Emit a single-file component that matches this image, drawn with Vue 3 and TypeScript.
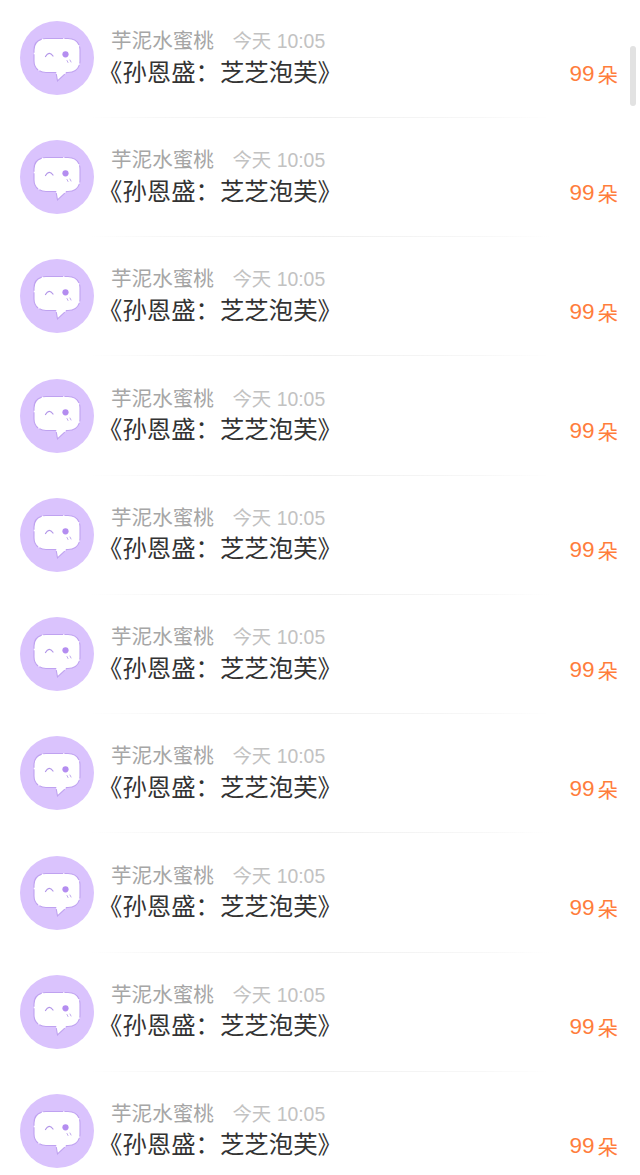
<script setup lang="ts">
interface Gift {
  id: number
  name: string
  time: string
  title: string
  count: number
}

const gifts: Gift[] = Array.from({ length: 10 }, (_, i) => ({
  id: i,
  name: '芋泥水蜜桃',
  time: '今天 10:05',
  title: '《孙恩盛：芝芝泡芙》',
  count: 99,
}))
</script>

<template>
  <div class="page">
    <div v-for="g in gifts" :key="g.id" class="row">
      <div class="main">
        <svg class="avatar" viewBox="0 0 74 74">
          <circle cx="37" cy="37" r="37" fill="#dac3fd" />
          <path
            d="M26 17.500 H48 C55 17.500 60 22 60 29 V40 C60 47 55 51.500 48 51.500 H46.500 L37.500 60 L36 51.500 H26 C19 51.500 14 47 14 40 V29 C14 22 19 17.500 26 17.500 Z"
            fill="#fff"
            stroke="#bfa2f0"
            stroke-width="1.1"
            stroke-dasharray="17 1.5"
          />
          <path d="M25.500 35.500 Q29 29.500 33 35" fill="none" stroke="#b295e8" stroke-width="1.2" stroke-linecap="round" />
          <circle cx="45.500" cy="33.300" r="3.100" fill="#b48df0" />
          <path d="M47 39.500 l1 2 M50 39 l1 2" stroke="#b9a0ea" stroke-width="0.9" stroke-linecap="round" />
        </svg>
        <div class="info">
          <div class="meta">
            <span class="name">{{ g.name }}</span>
            <span class="time">{{ g.time }}</span>
          </div>
          <div class="title">{{ g.title }}</div>
        </div>
        <div class="count">
          <span class="num">{{ g.count }}</span>
          <span class="unit">朵</span>
        </div>
      </div>
      <div class="divider"></div>
    </div>
    <div class="scrollbar"></div>
  </div>
</template>

<style>
html,
body {
  background: #fff;
  overflow: hidden;
}
</style>

<style scoped>
.page {
  position: relative;
  width: 640px;
  height: 1175px;
  overflow: hidden;
  background: #fff;
  font-family: "Liberation Sans", "Noto Sans CJK SC", sans-serif;
}

.row {
  height: 119.22px;
  padding-top: 21px;
  box-sizing: border-box;
}

.main {
  display: flex;
  height: 96px;
  padding: 0 22px 0 20px;
  box-sizing: border-box;
}

.avatar {
  width: 74px;
  height: 74px;
  flex-shrink: 0;
}

.info {
  flex: 1;
  margin-left: 4px;
  min-width: 0;
}

.meta {
  display: flex;
  align-items: center;
  gap: 18.5px;
  height: 24px;
  margin-top: 8px;
  padding-left: 13px;
}

.name {
  font-size: 20.6px;
  color: #a6a6a6;
  line-height: 24px;
}

.time {
  font-size: 19.4px;
  color: #c2c2c2;
  line-height: 24px;
}

.title {
  font-size: 24.4px;
  color: #333;
  line-height: 32px;
  margin-top: 3.5px;
  white-space: nowrap;
}

.count {
  display: flex;
  align-items: center;
  gap: 3px;
  align-self: flex-start;
  height: 26px;
  margin-top: 39.5px;
  color: #ff7d3c;
  white-space: nowrap;
}

.num {
  font-size: 22.5px;
}

.unit {
  font-size: 20.5px;
}

.divider {
  height: 1px;
  margin: 0 90px;
  background: linear-gradient(90deg, #fff 0%, #f7f7f7 15%, #f0f0f0 50%, #f7f7f7 85%, #fff 100%);
}

.scrollbar {
  position: absolute;
  top: 46px;
  left: 630px;
  width: 6px;
  height: 60px;
  border-radius: 3px;
  background: #e2e2e2;
}
</style>
